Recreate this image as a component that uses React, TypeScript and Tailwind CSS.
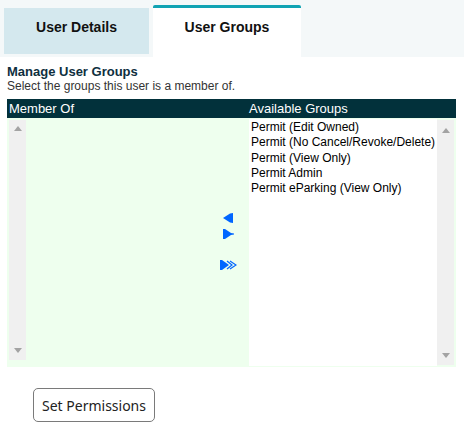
import React from "react";

// Small gray triangle used in the fake list scrollbars
const ScrollArrow = ({ up }: { up?: boolean }) => (
  <svg width="8" height="5" viewBox="0 0 8 5" className="block">
    <polygon points={up ? "0,5 4,0 8,5" : "0,0 8,0 4,5"} fill="#a3a3a3" />
  </svg>
);

const Scrollbar = ({ className }: { className: string }) => (
  <div className={`flex flex-col items-center justify-between bg-[#f0f0f0] ${className}`}>
    <ScrollArrow up />
    <ScrollArrow />
  </div>
);

const availableGroups = [
  "Permit (Edit Owned)",
  "Permit (No Cancel/Revoke/Delete)",
  "Permit (View Only)",
  "Permit Admin",
  "Permit eParking (View Only)",
];

export default function App() {
  return (
    <div className="w-[464px] h-[429px] bg-white font-['Liberation_Sans',Arial,sans-serif] overflow-hidden">
      {/* Tabs */}
      <div className="flex h-[57px] bg-[#f4f8f9]">
        <div className="mt-[8px] ml-[4px] w-[145px] h-[46px] bg-[#d4e8ee] pt-[11px] text-center text-[14px] leading-[16px] font-bold text-[#111]">
          User Details
        </div>
        <div className="mt-[5px] ml-[4px] w-[148px] h-[52px] bg-white border-t-[3px] border-[#10a3b3] rounded-t-[2px] pt-[11px] text-center text-[14px] leading-[16px] font-bold text-[#111]">
          User Groups
        </div>
        <div className="flex-1" />
      </div>

      {/* Content */}
      <div className="px-[7px] pt-[7px]">
        <div className="text-[13px] leading-[15px] font-bold text-[#0e2f3e]">Manage User Groups</div>
        <div className="text-[12px] leading-[14px] text-[#333]">Select the groups this user is a member of.</div>

        <div className="mt-[6px] w-[449px]">
          <div className="flex h-[19px] bg-[#02313b] text-white text-[13px] leading-[19px]">
            <div className="w-[242px] pl-[2px]">Member Of</div>
            <div className="flex-1">Available Groups</div>
          </div>

          <div className="flex h-[249px] bg-[#eeffee]">
            {/* Member of list */}
            <div className="flex w-[242px]">
              <Scrollbar className="ml-[2px] mt-[2px] w-[17px] h-[240px] pt-[6px] pb-[7px]" />
              <div className="flex-1 flex justify-end pr-[12px]">
                <div className="w-[17px] mt-[95px] flex flex-col items-center">
                  <svg width="11" height="10" viewBox="0 0 11 10" className="block">
                    <polygon points="0,5 7,0.5 10,0 10,10 7,9.5" fill="#0066ff" />
                  </svg>
                  <svg width="11" height="10" viewBox="0 0 11 10" className="block mt-[6px]">
                    <polygon points="0,0 2,0 8,4 11,4.5 11,5.5 8,6 2,10 0,10" fill="#0066ff" />
                  </svg>
                  <svg width="17" height="10" viewBox="0 0 17 10" className="block mt-[21px]">
                    <polygon points="0,0 2,0 9,5 2,10 0,10" fill="#0066ff" />
                    <polyline points="7,1 12,5 7,9" fill="none" stroke="#0066ff" strokeWidth="1.2" />
                    <polyline points="10,1 16,5 10,9" fill="none" stroke="#0066ff" strokeWidth="1.2" />
                  </svg>
                </div>
              </div>
            </div>

            {/* Available list */}
            <div className="flex-1 flex pr-[2px] pt-[1px] pb-[1px]">
              <div className="flex-1 bg-white pl-[2px] pt-[1px] text-[12px] leading-[15.3px] text-black">
                {availableGroups.map((g) => (
                  <div key={g} className="whitespace-nowrap">{g}</div>
                ))}
              </div>
              <Scrollbar className="w-[17px] mt-[1px] mb-[1px] pt-[8px] pb-[7px]" />
            </div>
          </div>
        </div>

        <button className="mt-[21px] ml-[26px] w-[122px] h-[34px] border border-[#7a7a7a] rounded-[5px] bg-white font-['Noto_Sans',sans-serif] text-[14px] text-[#222]">
          Set Permissions
        </button>
      </div>
    </div>
  );
}
